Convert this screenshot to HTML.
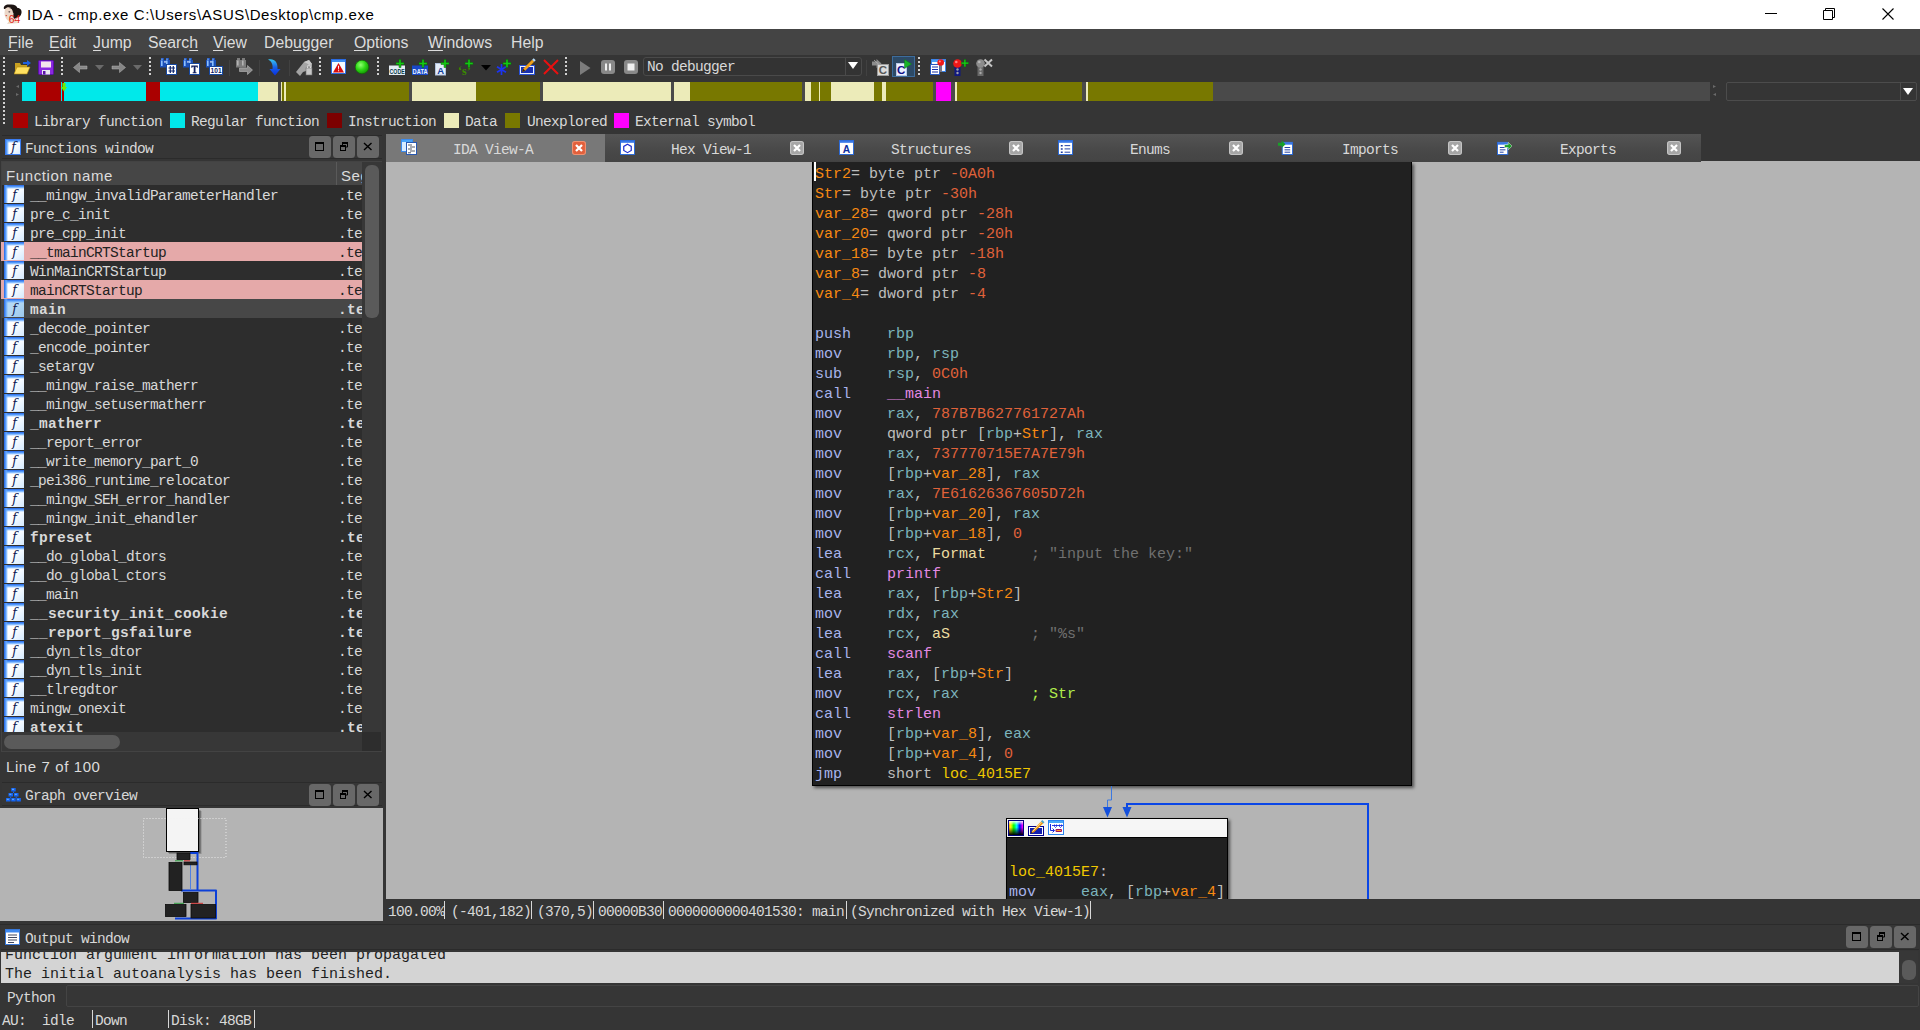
<!DOCTYPE html>
<html lang="en">
<head>
<meta charset="utf-8">
<title>IDA - cmp.exe</title>
<style>
*{box-sizing:border-box;margin:0;padding:0}
html,body{width:1920px;height:1030px;overflow:hidden;background:#353535}
body{position:relative;font-family:"Liberation Sans",sans-serif;color:#d6d6d6}
.a{position:absolute}
.mono{font-family:"Liberation Mono",monospace;font-size:14.5px;letter-spacing:-.701px;white-space:pre;color:#d8d8d8}
.ui{font-family:"Liberation Sans",sans-serif}
/* title bar */
#title{left:0;top:0;width:1920px;height:29px;background:#fff}
#title .t{left:27px;top:5px;font-size:15px;letter-spacing:.6px;color:#000;line-height:20px;white-space:pre}
/* menu */
#menu{left:0;top:29px;width:1920px;height:26px;background:#444}
#menu span{position:absolute;top:4px;font-size:15.8px;line-height:20px;color:#dcdcdc;white-space:pre}
#menu u{text-decoration:underline;text-underline-offset:2px;text-decoration-thickness:1px}
/* nav band */
#nav{left:22px;top:82px;width:1688px;height:19px;background:#4a4a4a}
#nav i{position:absolute;top:0;height:19px;display:block}
.cy{background:#00e9ea}.rd{background:#aa0000}.bg{background:#ecebb9}.ol{background:#787800}.mg{background:#ff00ff}.gp{background:#4a4a4a}
/* legend */
#legend i{position:absolute;top:113px;width:15px;height:15px;display:block}
#legend span{position:absolute;top:113px;line-height:18px}
/* grips */
.grip{width:2px;background-image:repeating-linear-gradient(to bottom,#d0d0d0 0 2px,transparent 2px 4px)}
/* dock titles */
.dtitle{background:#363636;border-top:1px solid #2b2b2b;border-bottom:1px solid #2b2b2b}
.dbtn{width:20px;height:20px;background:#585858;border-radius:3px}

.ficon{display:block;background:linear-gradient(to right,#2464e4 0,#62a8ff 2px,rgba(160,208,255,0) 4px),linear-gradient(to bottom,#2464e4 0,#62a8ff 2px,rgba(160,208,255,0) 4px),linear-gradient(135deg,#fff 45%,#d4eaff);overflow:hidden;text-align:center}
.ficon b{display:block;font:italic 12.5px/16px "DejaVu Serif","Liberation Serif",serif;color:#0c1850;margin-top:0;text-indent:1px}
.row{left:1px;width:361px;overflow:hidden}
.row .ficon{position:absolute;left:3px;top:0;width:20px;height:18px}
.row .ficon b{line-height:19px}
.row .n,.row .s{position:absolute;top:2px;font:14.5px/18px "Liberation Mono",monospace;letter-spacing:-.701px;white-space:pre;color:#d8d8d8}
.row .n{left:29px}.row .s{left:337px}
.row.pk{background:#e5a9a9}.row.pk .n,.row.pk .s{color:#222}
.row.sel{background:#474747}.row.sel .ficon{background:linear-gradient(to right,#2464e4 0,#62a8ff 2px,rgba(160,208,255,0) 4px),linear-gradient(to bottom,#2464e4 0,#62a8ff 2px,rgba(160,208,255,0) 4px),linear-gradient(135deg,#b4d8f4 45%,#9cc8ec)}
.row.bd .n,.row.bd .s{font-weight:bold;letter-spacing:.299px}
.hdr{font-size:15px;letter-spacing:.6px;line-height:20px;color:#dcdcdc;white-space:pre}

.node{background:#212121;border:1px solid #000;box-shadow:2px 2px 3px rgba(0,0,0,.55)}
.code{position:absolute;font:15px/20px "Liberation Mono",monospace;white-space:pre;color:#c8c8c8}
</style>
</head>
<body>
<!-- ===== TITLE BAR ===== -->
<div id="title" class="a">
  <svg class="a" style="left:2px;top:3px" width="22" height="22" viewBox="2 3 22 22">
    <path d="M4 9C3 6 6 4 10 4.500C14 4 17 6 17.500 8C20.500 8 22 10.500 21.500 13C21 16 19 17.500 17 17.500L14 19 9 9z" fill="#1c1412"/>
    <path d="M5 9C7 6.500 11 7 12.500 9.500C14 12 13.500 15 13 17L15 20 19 23 7 24 9 21C6 20 4.500 16 4.500 13z" fill="#ecd8c8"/>
    <path d="M9 8C12 8 13 11 13 13L15 12 13 7z" fill="#1c1412"/>
    <ellipse cx="9.300" cy="11.800" rx="1" ry=".6" fill="#4a3a40"/>
    <ellipse cx="6.300" cy="15.600" rx=".9" ry=".6" fill="#d05040"/>
    <text x="8.800" y="23" font-family="Liberation Sans,sans-serif" font-size="10.500" fill="#e02414" textLength="11.500" lengthAdjust="spacingAndGlyphs">64</text>
  </svg>
  <div class="a t ui">IDA - cmp.exe C:\Users\ASUS\Desktop\cmp.exe</div>
  <svg class="a" style="left:1760px;top:0" width="160" height="29" viewBox="0 0 160 29" fill="none" stroke="#000" stroke-width="1">
    <path d="M5 13.500H17"/>
    <path d="M63.500 10.500H72.500V19.500H63.500Z M65.500 10.500V8.500H74.500V17.500H72.500"/>
    <path d="M122.500 8.500L133.500 19.500M133.500 8.500L122.500 19.500" stroke-width="1.100"/>
  </svg>
</div>
<!-- ===== MENU BAR ===== -->
<div id="menu" class="a ui">
  <span style="left:8px"><u>F</u>ile</span>
  <span style="left:49px"><u>E</u>dit</span>
  <span style="left:93px"><u>J</u>ump</span>
  <span style="left:148px">Searc<u>h</u></span>
  <span style="left:213px"><u>V</u>iew</span>
  <span style="left:264px">Deb<u>u</u>gger</span>
  <span style="left:354px"><u>O</u>ptions</span>
  <span style="left:428px"><u>W</u>indows</span>
  <span style="left:511px">Help</span>
</div>
<!-- ===== TOOLBAR (icons inserted below) ===== -->
<div id="toolbar" class="a" style="left:0;top:55px;width:1920px;height:26px">
<div class="a grip" style="left:3px;top:2px;height:18px"></div>
<svg class="a" style="left:14px;top:4px" width="17" height="17" viewBox="0 0 17 17"><path d="M1 4h5l1 2h6v9H1z" fill="#c8a020"/><path d="M3 8h13l-3 7H0z" fill="#ffe060" stroke="#b08810" stroke-width=".6"/><path d="M9 3h4V1l4 3-4 3V5H9z" fill="#2060e0"/></svg>
<svg class="a" style="left:38px;top:5px" width="16" height="16" viewBox="0 0 16 16"><rect x=".5" y=".5" width="15" height="14" rx="1" fill="#8a28e0" stroke="#5a10a8"/><rect x="3" y="1.5" width="10" height="6" fill="#f4e4ec"/><rect x="4" y="10" width="8" height="4.5" fill="#e8e8f0"/><rect x="5" y="11" width="2.5" height="3.5" fill="#5a10a8"/></svg>
<div class="a grip" style="left:61px;top:2px;height:18px"></div>
<svg class="a" style="left:73px;top:6px" width="15" height="13" viewBox="0 0 15 13"><path d="M.5 6.500L6.500 1.500v3.500H14v3H6.500V11.500z" fill="#868686" stroke="#b4b4b4" stroke-width=".5"/></svg>
<svg class="a" style="left:95px;top:10px" width="10" height="6" viewBox="0 0 10 6"><path d="M0 0h9L4.5 5z" fill="#6a6a6a"/></svg>
<svg class="a" style="left:111px;top:6px" width="15" height="13" viewBox="0 0 15 13"><path d="M14.500 6.500L8.500 1.500v3.500H1v3H8.500V11.500z" fill="#868686" stroke="#b4b4b4" stroke-width=".5"/></svg>
<svg class="a" style="left:133px;top:10px" width="10" height="6" viewBox="0 0 10 6"><path d="M0 0h9L4.5 5z" fill="#6a6a6a"/></svg>
<div class="a grip" style="left:149px;top:2px;height:18px"></div>
<svg class="a" style="left:160px;top:3px" width="17" height="17" viewBox="0 0 17 17"><path d="M1 0h3v2h1v7.500H0V2h1zM6 0h3v2h1v7.500H5V2h1z" fill="#1c50b8"/><path d="M1 2.500h1.600v5.500H1zM6 2.500h1.600v5.500H6zM1.500 .5h1v1.500h-1zM6.500 .5h1v1.500h-1z" fill="#8cc0ff"/><rect x="4.300" y="3.200" width="1.400" height="1.400" fill="#fff"/><rect x="6.500" y="6.500" width="10" height="10" fill="#fff" stroke="#1848a0"/><path d="M8.500 10h6.500M8.500 13h6.500M10.300 8v7M13.300 8v7" stroke="#102870" stroke-width="1.200"/></svg>
<svg class="a" style="left:183px;top:3px" width="17" height="17" viewBox="0 0 17 17"><path d="M1 0h3v2h1v7.500H0V2h1zM6 0h3v2h1v7.500H5V2h1z" fill="#1c50b8"/><path d="M1 2.500h1.600v5.500H1zM6 2.500h1.600v5.500H6zM1.500 .5h1v1.500h-1zM6.500 .5h1v1.500h-1z" fill="#8cc0ff"/><rect x="4.300" y="3.200" width="1.400" height="1.400" fill="#fff"/><rect x="6.500" y="5.500" width="10" height="11" fill="#fff" stroke="#1848a0"/><path d="M8.300 7.500h6.500v2.200h-.8l-.5-1h-1v5.500h1v1h-3.800v-1h1V8.700h-1l-.5 1h-.9z" fill="#102060"/></svg>
<svg class="a" style="left:206px;top:3px" width="17" height="17" viewBox="0 0 17 17"><path d="M1 0h3v2h1v7.500H0V2h1zM6 0h3v2h1v7.500H5V2h1z" fill="#1c50b8"/><path d="M1 2.500h1.600v5.500H1zM6 2.500h1.600v5.500H6zM1.500 .5h1v1.500h-1zM6.500 .5h1v1.500h-1z" fill="#8cc0ff"/><rect x="4.300" y="3.200" width="1.400" height="1.400" fill="#fff"/><rect x="3.500" y="8.500" width="13" height="8" fill="#fff" stroke="#1848a0"/><text x="4.600" y="15.300" font-family="Liberation Sans,sans-serif" font-size="7" font-weight="bold" fill="#102060" textLength="11" lengthAdjust="spacingAndGlyphs">101</text></svg>
<div class="a" style="left:229px;top:5px;width:1px;height:16px;background:#414141"></div>
<svg class="a" style="left:235px;top:3px" width="18" height="17" viewBox="0 0 18 17"><path d="M2 0h3v2h1v7.500H1V2h1zM7 0h3v2h1v7.500H6V2h1z" fill="#7c7c7c"/><path d="M2 2.500h1.600v5H2zM7 2.500h1.600v5H7z" fill="#b4b4b4"/><path d="M4.500 10h8V7.500L17.500 12 12.500 16.500V13.500h-8z" fill="#8c8c8c" stroke="#b8b8b8" stroke-width=".6"/></svg>
<div class="a" style="left:259px;top:5px;width:1px;height:16px;background:#414141"></div>
<svg class="a" style="left:266px;top:3px" width="16" height="19" viewBox="0 0 16 19"><defs><linearGradient id="ba" x1="0" y1="0" x2="0" y2="1"><stop offset="0" stop-color="#38c8f0"/><stop offset=".5" stop-color="#1860e8"/><stop offset="1" stop-color="#0a30e0"/></linearGradient></defs><path d="M2 1.500c6-1.500 10 2 9.500 9.500H14.500l-5.500 6.500L3.500 11h3C7 6.500 5.500 3 2 1.500z" fill="url(#ba)"/></svg>
<div class="a" style="left:289px;top:5px;width:1px;height:16px;background:#414141"></div>
<svg class="a" style="left:295px;top:4px" width="19" height="17" viewBox="0 0 19 17"><path d="M1 13L9 3l5-2 3 4v5l-9 3-3 4z" fill="#a4a4a4"/><path d="M9 3l5-2 3 4-2 1z" fill="#c8c8c8"/><rect x="11" y="9" width="6" height="7" fill="#c8c8c8" stroke="#707070" stroke-width=".6"/><path d="M12.5 9V7.5a1.5 1.5 0 013 0V9" stroke="#d8d8d8" fill="none"/></svg>
<div class="a grip" style="left:319px;top:2px;height:18px"></div>
<svg class="a" style="left:331px;top:4px" width="15" height="15" viewBox="0 0 15 15"><rect x=".5" y=".5" width="14" height="14" fill="#f4fcff" stroke="#2a6ae0"/><rect x="1" y="1" width="13" height="2" fill="#3c90f4"/><path d="M7.500 4l5.500 9.500H2z" fill="#d80c0c"/><path d="M7 6.800h1.100l-.2 3.600h-.7zM7 11.200h1.100v1.100H7z" fill="#fff"/></svg>
<svg class="a" style="left:355px;top:5px" width="15" height="15" viewBox="0 0 15 15"><defs><radialGradient id="gb" cx=".4" cy=".35" r=".7"><stop offset="0" stop-color="#90ff70"/><stop offset=".5" stop-color="#30d818"/><stop offset="1" stop-color="#109000"/></radialGradient></defs><circle cx="7" cy="7" r="6.800" fill="url(#gb)" stroke="#0a6a00" stroke-width=".6"/></svg>
<div class="a grip" style="left:377px;top:2px;height:18px"></div>
<svg class="a" style="left:389px;top:4px" width="17" height="17" viewBox="0 0 17 17"><rect x="0" y="6.500" width="16" height="9.500" fill="#e4ecf4"/><text x=".6" y="14.600" font-family="Liberation Sans,sans-serif" font-size="7.500" font-weight="bold" fill="#083848" textLength="15" lengthAdjust="spacingAndGlyphs">CODE</text><path d="M10 .5h2v3h3v2h-3v3h-2v-3h-3v-2h3z" fill="#14c814" stroke="#0a6a0a" stroke-width=".5"/></svg>
<svg class="a" style="left:412px;top:4px" width="17" height="17" viewBox="0 0 17 17"><rect x="0" y="6.500" width="16" height="9.500" fill="#1848c8"/><text x=".6" y="14.600" font-family="Liberation Sans,sans-serif" font-size="7.500" font-weight="bold" fill="#e8f4ff" textLength="15" lengthAdjust="spacingAndGlyphs">DATA</text><path d="M10 .5h2v3h3v2h-3v3h-2v-3h-3v-2h3z" fill="#14c814" stroke="#0a6a0a" stroke-width=".5"/></svg>
<svg class="a" style="left:435px;top:4px" width="17" height="17" viewBox="0 0 17 17"><rect x=".5" y="4.500" width="10" height="11.500" fill="#e4ecf8" stroke="#b0c0dc"/><text x="2.300" y="14.500" font-family="Liberation Sans,sans-serif" font-size="9.500" font-weight="bold" fill="#103c98">A</text><path d="M9 .5h2v3h3v2h-3v3h-2v-3h-3v-2h3z" fill="#14c814" stroke="#0a6a0a" stroke-width=".5"/></svg>
<svg class="a" style="left:458px;top:4px" width="17" height="17" viewBox="0 0 17 17"><text x="0" y="15.500" font-family="Liberation Serif,serif" font-size="12" font-weight="bold" fill="#3a8a00">‘s’</text><path d="M10 .5h2v3h3v2h-3v3h-2v-3h-3v-2h3z" fill="#14c814" stroke="#0a6a0a" stroke-width=".5"/></svg>
<svg class="a" style="left:481px;top:10px" width="10" height="6" viewBox="0 0 10 6"><path d="M0 0h10L5 5.500z" fill="#000"/></svg>
<svg class="a" style="left:496px;top:4px" width="17" height="17" viewBox="0 0 17 17"><path d="M5.500 5v11M1 7.700l9 5.600M10 7.700l-9 5.600" stroke="#1c34f0" stroke-width="1.700"/><path d="M10 .5h2v3h3v2h-3v3h-2v-3h-3v-2h3z" fill="#14c814" stroke="#0a6a0a" stroke-width=".5"/></svg>
<svg class="a" style="left:519px;top:2px" width="18" height="18" viewBox="0 0 18 18"><rect x=".5" y="8.500" width="15" height="9" fill="#1830b0" stroke="#2850d8" stroke-width="1"/><rect x="1.500" y="9.500" width="13" height="7" fill="none" stroke="#e8f0ff" stroke-width="1"/><path d="M3 15l1.200-3.200 9-9 2 2-9 9z" fill="#f0a018"/><path d="M13.200 2.800l1.500-1.500 2 2-1.500 1.500z" fill="#b8dcf8"/><path d="M3 15l1.200-3.200 2 2z" fill="#302010"/></svg>
<svg class="a" style="left:543px;top:4px" width="16" height="16" viewBox="0 0 16 16"><path d="M1 1l14 14M15 1L1 15" stroke="#e81010" stroke-width="2"/></svg>
<div class="a grip" style="left:565px;top:2px;height:18px"></div>
<svg class="a" style="left:580px;top:6px" width="11" height="14" viewBox="0 0 11 14"><path d="M0 0l10.5 7L0 14z" fill="#7c7c7c"/></svg>
<svg class="a" style="left:601px;top:5px" width="14" height="14" viewBox="0 0 14 14"><rect width="14" height="14" rx="3" fill="#888"/><rect x="4" y="3.5" width="2" height="7" fill="#f0f0f0"/><rect x="8" y="3.5" width="2" height="7" fill="#f0f0f0"/></svg>
<svg class="a" style="left:624px;top:5px" width="14" height="14" viewBox="0 0 14 14"><rect width="14" height="14" rx="3" fill="#888"/><rect x="3.5" y="3.5" width="7" height="7" fill="#f0f0f0"/></svg>
<div class="a" style="left:643px;top:2px;width:219px;height:19px;background:#333;border:1px solid #4a4a4a;border-radius:3px"></div>
<div class="a" style="left:845px;top:3px;width:1px;height:17px;background:#4a4a4a"></div>
<div class="a mono" style="left:647px;top:3px;line-height:18px">No debugger</div>
<svg class="a" style="left:848px;top:7px" width="11" height="8" viewBox="0 0 11 8"><path d="M0 0h10L5 7z" fill="#fff"/></svg>
<div class="a" style="left:866px;top:5px;width:1px;height:16px;background:#414141"></div>
<svg class="a" style="left:872px;top:4px" width="17" height="17" viewBox="0 0 17 17"><path d="M0 2.500h4.500V0L9.500 4.500 4.500 9V6.500H0z" fill="#8c8c8c"/><rect x="5.500" y="5.500" width="11" height="11" fill="#dcdcdc" stroke="#9c9c9c"/><text x="6.800" y="15.300" font-family="Liberation Sans,sans-serif" font-size="11.500" font-weight="bold" fill="#585858">C</text><path d="M2 1l5 4.500" stroke="#b8b8b8" stroke-width=".8"/></svg>
<div class="a" style="left:892px;top:1px;width:23px;height:21px;background:#2d4a66;border:1px solid #3c6c9c"></div>
<svg class="a" style="left:896px;top:4px" width="17" height="17" viewBox="0 0 17 17"><rect x=".5" y="4.500" width="10" height="12" fill="#eef2ff" stroke="#b8c8e8"/><text x="1" y="15" font-family="Liberation Sans,sans-serif" font-size="11.500" font-weight="bold" fill="#101088">C</text><path d="M8.500 .5l7 4.500-7 4.500z" fill="#18b428" stroke="#0c7c18" stroke-width=".5"/></svg>
<div class="a grip" style="left:918px;top:2px;height:18px"></div>
<svg class="a" style="left:930px;top:3px" width="17" height="18" viewBox="0 0 17 18"><rect x="1.500" y="1.500" width="14" height="12" fill="#f4f8ff" stroke="#3c84e8"/><rect x="2" y="2" width="13" height="2" fill="#48a0f8"/><rect x=".5" y="6.500" width="9" height="10" fill="#fff" stroke="#2858c0"/><path d="M2 9h6M2 11.500h6M2 14h6" stroke="#1830a8" stroke-width="1.200"/><rect x="9.500" y="7" width="2.500" height="7" fill="#787888"/><circle cx="10.700" cy="4.500" r="3.300" fill="#f01818"/><circle cx="9.800" cy="3.500" r="1" fill="#ff9090"/></svg>
<svg class="a" style="left:953px;top:3px" width="18" height="18" viewBox="0 0 18 18"><rect x="1.500" y="9" width="6" height="9" fill="#101880"/><circle cx="4.500" cy="11.500" r="1.200" fill="#a0a0a8"/><circle cx="4.500" cy="15" r="1.200" fill="#a0a0a8"/><circle cx="4.500" cy="5.500" r="4.300" fill="#f01818"/><circle cx="3.300" cy="4" r="1.300" fill="#ff8080"/><path d="M11 1.500h1.800v2.700h2.700v1.800h-2.700v2.700H11V6H8.300V4.200H11z" fill="#14c814" stroke="#0a6a0a" stroke-width=".4"/></svg>
<svg class="a" style="left:976px;top:3px" width="18" height="18" viewBox="0 0 18 18"><rect x="1.500" y="9" width="6" height="9" fill="#686868"/><circle cx="4.500" cy="11.500" r="1.200" fill="#a8a8a8"/><circle cx="4.500" cy="15" r="1.200" fill="#a8a8a8"/><circle cx="4.500" cy="5.500" r="4.300" fill="#8c8c8c"/><circle cx="3.300" cy="4" r="1.300" fill="#b8b8b8"/><path d="M8.500 1.500l7.500 7M16 1.500l-7.500 7" stroke="#c4c4c4" stroke-width="2"/></svg>
</div>
<!-- ===== NAV BAND ===== -->
<div class="a grip" style="left:3px;top:82px;height:43px"></div>
<div id="nav" class="a">
<i class="cy" style="left:0px;width:14px"></i>
<i class="rd" style="left:14px;width:25px"></i>
<i class="cy" style="left:39px;width:1px"></i>
<i class="rd" style="left:40px;width:2px"></i>
<i class="cy" style="left:42px;width:82px"></i>
<i class="rd" style="left:124px;width:14px"></i>
<i class="cy" style="left:138px;width:98px"></i>
<i class="bg" style="left:236px;width:20px"></i>
<i class="gp" style="left:256px;width:3px"></i>
<i class="bg" style="left:259px;width:1px"></i>
<i class="ol" style="left:260px;width:2px"></i>
<i class="bg" style="left:262px;width:2px"></i>
<i class="ol" style="left:264px;width:123px"></i>
<i class="gp" style="left:387px;width:3px"></i>
<i class="bg" style="left:390px;width:64px"></i>
<i class="ol" style="left:454px;width:64px"></i>
<i class="gp" style="left:518px;width:3px"></i>
<i class="bg" style="left:521px;width:128px"></i>
<i class="gp" style="left:649px;width:3px"></i>
<i class="bg" style="left:652px;width:16px"></i>
<i class="ol" style="left:668px;width:112px"></i>
<i class="gp" style="left:780px;width:3px"></i>
<i class="bg" style="left:783px;width:6px"></i>
<i class="ol" style="left:789px;width:8px"></i>
<i class="bg" style="left:797px;width:1px"></i>
<i class="ol" style="left:798px;width:11px"></i>
<i class="bg" style="left:809px;width:43px"></i>
<i class="ol" style="left:852px;width:8px"></i>
<i class="bg" style="left:860px;width:4px"></i>
<i class="ol" style="left:864px;width:47px"></i>
<i class="gp" style="left:911px;width:3px"></i>
<i class="mg" style="left:914px;width:15px"></i>
<i class="gp" style="left:929px;width:4px"></i>
<i class="bg" style="left:933px;width:2px"></i>
<i class="ol" style="left:935px;width:125px"></i>
<i class="gp" style="left:1060px;width:4px"></i>
<i class="bg" style="left:1064px;width:2px"></i>
<i class="ol" style="left:1066px;width:125px"></i>
<svg class="a" style="left:39px;top:1px" width="6" height="9" viewBox="0 0 6 9"><path d="M1.5 0H4.5V4H6L3 8.5L0 4H1.5Z" fill="#6cf000"/></svg>
</div>
<div class="a" style="left:1726px;top:82px;width:191px;height:19px;background:#353535;border:1px solid #4c4c4c;border-radius:2px"></div>
<div class="a" style="left:1900px;top:83px;width:1px;height:17px;background:#4c4c4c"></div>
<svg class="a" style="left:1903px;top:88px" width="11" height="8" viewBox="0 0 11 8"><path d="M0 0h10L5 7z" fill="#fff"/></svg>
<svg class="a" style="left:1713px;top:85px" width="4" height="12" viewBox="0 0 4 12"><path d="M0 0l3 1.500-3 1.500zM3 8l-3 1.500 3 1.500z" fill="#6a6a6a"/></svg>
<svg class="a" style="left:16px;top:85px" width="4" height="12" viewBox="0 0 4 12"><path d="M3 0l-3 1.500 3 1.500zM0 8l3 1.500-3 1.500z" fill="#6a6a6a"/></svg>
<!-- ===== LEGEND ===== -->
<div id="legend" class="a mono" style="left:0;top:0">
<i style="left:13px;background:#aa0000"></i><span style="left:34px">Library function</span>
<i style="left:170px;background:#00e9ea"></i><span style="left:191px">Regular function</span>
<i style="left:327px;background:#7c0000"></i><span style="left:348px">Instruction</span>
<i style="left:444px;background:#ecebb9"></i><span style="left:465px">Data</span>
<i style="left:505px;background:#787800"></i><span style="left:527px">Unexplored</span>
<i style="left:614px;background:#ff00ff"></i><span style="left:635px">External symbol</span>
</div>
<!-- ===== LEFT: FUNCTIONS WINDOW ===== -->
<div id="funcs" class="a" style="left:0;top:133px;width:386px;height:650px">
<div class="a dtitle" style="left:2px;top:2px;width:380px;height:24px"></div>
<div class="a ficon" style="left:5px;top:6px;width:16px;height:16px;box-shadow:inset 0 0 0 1px #3a7cf0"><b>f</b></div>
<div class="a mono" style="left:25px;top:7px;line-height:18px">Functions window</div>
<svg class="a" style="left:309px;top:3px" width="22" height="22" viewBox="-.5 -.5 22 22"><rect x="-.5" y="-.5" width="22" height="22" rx="3.500" fill="#686868"/><rect x="6" y="6" width="8" height="8" fill="none" stroke="#000" stroke-width="1"/><rect x="5.500" y="5.500" width="9" height="2" fill="#000"/></svg><svg class="a" style="left:333px;top:3px" width="22" height="22" viewBox="-.5 -.5 22 22"><rect x="-.5" y="-.5" width="22" height="22" rx="3.500" fill="#686868"/><rect x="7" y="9" width="5" height="5" fill="none" stroke="#000" stroke-width="1"/><rect x="6.500" y="8.500" width="6" height="2" fill="#000"/><path d="M9 8.500V6H14V10.500H12.500" fill="none" stroke="#000" stroke-width="1"/><rect x="8.500" y="5.500" width="6" height="2" fill="#000"/></svg><svg class="a" style="left:357px;top:3px" width="22" height="22" viewBox="-.5 -.5 22 22"><rect x="-.5" y="-.5" width="22" height="22" rx="3.500" fill="#686868"/><path d="M6.500 6.500l7.500 7M14 6.500l-7.500 7" stroke="#000" stroke-width="1.400"/></svg>
<div class="a" style="left:1px;top:28px;width:381px;height:591px;background:#2d2d2d;border:1px solid #434343"></div>
<div class="a" style="left:2px;top:29px;width:360px;height:23px;background:#464646"></div>
<div class="a" style="left:336px;top:29px;width:1px;height:23px;background:#5a5a5a"></div>
<div class="a ui hdr" style="left:6px;top:33px">Function name</div>
<div class="a ui hdr" style="left:341px;top:33px;width:22px;overflow:hidden">Seg</div>
<div class="a row" style="top:52px;height:19px"><i class="ficon"><b>f</b></i><span class="n">__mingw_invalidParameterHandler</span><span class="s">.te</span></div>
<div class="a row" style="top:71px;height:19px"><i class="ficon"><b>f</b></i><span class="n">pre_c_init</span><span class="s">.te</span></div>
<div class="a row" style="top:90px;height:19px"><i class="ficon"><b>f</b></i><span class="n">pre_cpp_init</span><span class="s">.te</span></div>
<div class="a row pk" style="top:109px;height:19px"><i class="ficon"><b>f</b></i><span class="n">__tmainCRTStartup</span><span class="s">.te</span></div>
<div class="a row" style="top:128px;height:19px"><i class="ficon"><b>f</b></i><span class="n">WinMainCRTStartup</span><span class="s">.te</span></div>
<div class="a row pk" style="top:147px;height:19px"><i class="ficon"><b>f</b></i><span class="n">mainCRTStartup</span><span class="s">.te</span></div>
<div class="a row sel bd" style="top:166px;height:19px"><i class="ficon"><b>f</b></i><span class="n">main</span><span class="s">.te</span></div>
<div class="a row" style="top:185px;height:19px"><i class="ficon"><b>f</b></i><span class="n">_decode_pointer</span><span class="s">.te</span></div>
<div class="a row" style="top:204px;height:19px"><i class="ficon"><b>f</b></i><span class="n">_encode_pointer</span><span class="s">.te</span></div>
<div class="a row" style="top:223px;height:19px"><i class="ficon"><b>f</b></i><span class="n">_setargv</span><span class="s">.te</span></div>
<div class="a row" style="top:242px;height:19px"><i class="ficon"><b>f</b></i><span class="n">__mingw_raise_matherr</span><span class="s">.te</span></div>
<div class="a row" style="top:261px;height:19px"><i class="ficon"><b>f</b></i><span class="n">__mingw_setusermatherr</span><span class="s">.te</span></div>
<div class="a row bd" style="top:280px;height:19px"><i class="ficon"><b>f</b></i><span class="n">_matherr</span><span class="s">.te</span></div>
<div class="a row" style="top:299px;height:19px"><i class="ficon"><b>f</b></i><span class="n">__report_error</span><span class="s">.te</span></div>
<div class="a row" style="top:318px;height:19px"><i class="ficon"><b>f</b></i><span class="n">__write_memory_part_0</span><span class="s">.te</span></div>
<div class="a row" style="top:337px;height:19px"><i class="ficon"><b>f</b></i><span class="n">_pei386_runtime_relocator</span><span class="s">.te</span></div>
<div class="a row" style="top:356px;height:19px"><i class="ficon"><b>f</b></i><span class="n">__mingw_SEH_error_handler</span><span class="s">.te</span></div>
<div class="a row" style="top:375px;height:19px"><i class="ficon"><b>f</b></i><span class="n">__mingw_init_ehandler</span><span class="s">.te</span></div>
<div class="a row bd" style="top:394px;height:19px"><i class="ficon"><b>f</b></i><span class="n">fpreset</span><span class="s">.te</span></div>
<div class="a row" style="top:413px;height:19px"><i class="ficon"><b>f</b></i><span class="n">__do_global_dtors</span><span class="s">.te</span></div>
<div class="a row" style="top:432px;height:19px"><i class="ficon"><b>f</b></i><span class="n">__do_global_ctors</span><span class="s">.te</span></div>
<div class="a row" style="top:451px;height:19px"><i class="ficon"><b>f</b></i><span class="n">__main</span><span class="s">.te</span></div>
<div class="a row bd" style="top:470px;height:19px"><i class="ficon"><b>f</b></i><span class="n">__security_init_cookie</span><span class="s">.te</span></div>
<div class="a row bd" style="top:489px;height:19px"><i class="ficon"><b>f</b></i><span class="n">__report_gsfailure</span><span class="s">.te</span></div>
<div class="a row" style="top:508px;height:19px"><i class="ficon"><b>f</b></i><span class="n">__dyn_tls_dtor</span><span class="s">.te</span></div>
<div class="a row" style="top:527px;height:19px"><i class="ficon"><b>f</b></i><span class="n">__dyn_tls_init</span><span class="s">.te</span></div>
<div class="a row" style="top:546px;height:19px"><i class="ficon"><b>f</b></i><span class="n">__tlregdtor</span><span class="s">.te</span></div>
<div class="a row" style="top:565px;height:19px"><i class="ficon"><b>f</b></i><span class="n">mingw_onexit</span><span class="s">.te</span></div>
<div class="a row bd" style="top:584px;height:15px"><i class="ficon"><b>f</b></i><span class="n">atexit</span><span class="s">.te</span></div>
<div class="a" style="left:362px;top:29px;width:20px;height:570px;background:#373737"></div>
<div class="a" style="left:365px;top:32px;width:14px;height:153px;background:#5a5a5a;border-radius:6px"></div>
<div class="a" style="left:2px;top:599px;width:380px;height:19px;background:#373737"></div>
<div class="a" style="left:362px;top:599px;width:19px;height:19px;background:#2d2d2d"></div>
<div class="a" style="left:4px;top:602px;width:116px;height:14px;background:#5a5a5a;border-radius:7px"></div>
<div class="a ui hdr" style="left:6px;top:624px">Line 7 of 100</div>
</div>
<!-- ===== LEFT: GRAPH OVERVIEW ===== -->
<div id="overview" class="a" style="left:0;top:783px;width:386px;height:140px">
<div class="a dtitle" style="left:2px;top:-1px;width:380px;height:24px"></div>
<svg class="a" style="left:6px;top:4.5px" width="15" height="14" viewBox="0 0 15 14"><g fill="#1464f0"><rect x="5.200" y="0" width="4.500" height="3.500"/><rect x="2.500" y="5" width="4.500" height="3.500"/><rect x="8" y="5" width="4.500" height="3.500"/><rect x="0" y="10" width="4.500" height="3.500"/><rect x="5.200" y="10" width="4.500" height="3.500"/><rect x="10.400" y="10" width="4.500" height="3.500"/></g><g fill="#70b4ff"><rect x="6" y=".8" width="2" height="1"/><rect x="3.300" y="5.800" width="2" height="1"/><rect x="8.800" y="5.800" width="2" height="1"/><rect x=".8" y="10.800" width="2" height="1"/><rect x="6" y="10.800" width="2" height="1"/><rect x="11.200" y="10.800" width="2" height="1"/></g><path d="M7.500 3.500v1.500M4.700 8.500v1.500M10.200 8.500v1.500" stroke="#1464f0"/></svg>
<div class="a mono" style="left:25px;top:4px;line-height:18px">Graph overview</div>
<svg class="a" style="left:309px;top:1px" width="22" height="22" viewBox="-.5 -.5 22 22"><rect x="-.5" y="-.5" width="22" height="22" rx="3.500" fill="#686868"/><rect x="6" y="6" width="8" height="8" fill="none" stroke="#000" stroke-width="1"/><rect x="5.500" y="5.500" width="9" height="2" fill="#000"/></svg><svg class="a" style="left:333px;top:1px" width="22" height="22" viewBox="-.5 -.5 22 22"><rect x="-.5" y="-.5" width="22" height="22" rx="3.500" fill="#686868"/><rect x="7" y="9" width="5" height="5" fill="none" stroke="#000" stroke-width="1"/><rect x="6.500" y="8.500" width="6" height="2" fill="#000"/><path d="M9 8.500V6H14V10.500H12.500" fill="none" stroke="#000" stroke-width="1"/><rect x="8.500" y="5.500" width="6" height="2" fill="#000"/></svg><svg class="a" style="left:357px;top:1px" width="22" height="22" viewBox="-.5 -.5 22 22"><rect x="-.5" y="-.5" width="22" height="22" rx="3.500" fill="#686868"/><path d="M6.500 6.500l7.500 7M14 6.500l-7.500 7" stroke="#000" stroke-width="1.400"/></svg>
<svg class="a" style="left:0;top:25px" width="383" height="113" viewBox="0 0 383 113"><rect x="0" y="0" width="383" height="113" fill="#b4b4b4"/><rect x="169" y="3" width="32.5" height="43" fill="#000" opacity=".22"/><rect x="168" y="2" width="32.5" height="43" fill="#000" opacity=".3"/><rect x="166.5" y="0.5" width="32.0" height="43.0" fill="#f4f4f4" stroke="#000" stroke-width="1"/><rect x="143.5" y="10.5" width="82.5" height="39" fill="none" stroke="#f0f0f0" stroke-width="1" stroke-dasharray="1 2" opacity=".85"/><path d="M190 45H197.500V82.5M181 82.5H216V110.5H175" fill="none" stroke="#0c40d8" stroke-width="2" stroke-linejoin="round"/><path d="M190.5 56V82" stroke="#5080e0" stroke-width="1"/><rect x="177" y="45" width="13" height="6.5" fill="#222" stroke="#0c0c0c" stroke-width=".8"/><rect x="184" y="54" width="13" height="2.7999999999999545" fill="#222" stroke="#0c0c0c" stroke-width=".8"/><rect x="175" y="52.299999999999955" width="8" height="1.0" fill="#30a040" /><rect x="184" y="52.299999999999955" width="6" height="1.0" fill="#d03030" /><rect x="169" y="54.5" width="13" height="28.0" fill="#222" stroke="#0c0c0c" stroke-width=".8"/><rect x="183.5" y="84.5" width="14.5" height="10.0" fill="#222" stroke="#0c0c0c" stroke-width=".8"/><rect x="174" y="94.79999999999995" width="10" height="1.0" fill="#30a040" /><rect x="191" y="94.79999999999995" width="12" height="1.0" fill="#d03030" /><rect x="165.5" y="96.5" width="20.5" height="12.0" fill="#222" stroke="#0c0c0c" stroke-width=".8"/><rect x="191" y="96.5" width="24.5" height="13.5" fill="#222" stroke="#0c0c0c" stroke-width=".8"/></svg>
</div>
<!-- ===== MAIN: TABS + GRAPH ===== -->
<div id="main" class="a" style="left:386px;top:133px;width:1534px;height:790px">
<div class="a" style="left:0;top:28px;width:1534px;height:738px;background:#b4b4b4"></div>
<div class="a" style="left:0;top:1px;width:1315px;height:28px;background:linear-gradient(#545454,#484848 60%,#444)"></div>
<div class="a" style="left:0;top:1px;width:219px;height:28px;background:#787878"></div>
<svg class="a" style="left:15px;top:6px" width="16" height="16" viewBox="0 0 16 16"><rect x=".5" y=".5" width="11" height="12" fill="#d8ecff" stroke="#3c8cf0"/><rect x="1" y="1" width="10" height="2" fill="#48a4f8"/><rect x="5.500" y="3.500" width="10" height="12" fill="#fff" stroke="#2858b0"/><path d="M7 6h4M9 8h5M7 10h4M9 12h5M7 13.800h3" stroke="#404858" stroke-width=".9"/></svg>
<div class="a mono" style="left:67px;top:8px;line-height:18px">IDA View-A</div>
<svg class="a" style="left:186px;top:8px" width="14" height="14" viewBox="0 0 13 13"><rect x=".5" y=".5" width="12" height="12" rx="2" fill="#e2603c" stroke="#f09070" stroke-width="1"/><path d="M3.700 3.700l5.600 5.600M9.300 3.700l-5.600 5.600" stroke="#fff" stroke-width="2.100"/></svg>
<svg class="a" style="left:234px;top:7px" width="15" height="15" viewBox="0 0 16 16"><rect x=".5" y=".5" width="15" height="15" fill="#fff" stroke="#2868d8"/><rect x="1" y="1" width="14" height="2" fill="#3878e8"/><path d="M8 4.5l4 2.3v4.4l-4 2.3-4-2.3V6.800z" fill="none" stroke="#2030d0" stroke-width="1.3"/></svg>
<div class="a mono" style="left:285px;top:8px;line-height:18px">Hex View-1</div>
<svg class="a" style="left:404px;top:8px" width="14" height="14" viewBox="0 0 13 13"><rect x=".5" y=".5" width="12" height="12" rx="2" fill="#a6a6a6" stroke="#c4c4c4" stroke-width="1"/><path d="M3.700 3.700l5.600 5.600M9.300 3.700l-5.600 5.600" stroke="#fff" stroke-width="2.100"/></svg>
<svg class="a" style="left:453px;top:7px" width="15" height="15" viewBox="0 0 16 16"><rect x=".5" y=".5" width="15" height="15" fill="#fff" stroke="#2868d8"/><rect x="1" y="1" width="14" height="2" fill="#3878e8"/><text x="4" y="14" font-family="Liberation Sans,sans-serif" font-size="11" font-weight="bold" fill="#1030a0">A</text></svg>
<div class="a mono" style="left:505px;top:8px;line-height:18px">Structures</div>
<svg class="a" style="left:623px;top:8px" width="14" height="14" viewBox="0 0 13 13"><rect x=".5" y=".5" width="12" height="12" rx="2" fill="#a6a6a6" stroke="#c4c4c4" stroke-width="1"/><path d="M3.700 3.700l5.600 5.600M9.300 3.700l-5.600 5.600" stroke="#fff" stroke-width="2.100"/></svg>
<svg class="a" style="left:672px;top:7px" width="15" height="15" viewBox="0 0 16 16"><rect x=".5" y=".5" width="15" height="15" fill="#fff" stroke="#2868d8"/><rect x="1" y="1" width="14" height="2" fill="#3878e8"/><path d="M3 6h2M3 9.500h2M3 13h2" stroke="#1838a0" stroke-width="1.6"/><path d="M7 6h6M7 9.500h6M7 13h6" stroke="#1838a0" stroke-width="1"/></svg>
<div class="a mono" style="left:744px;top:8px;line-height:18px">Enums</div>
<svg class="a" style="left:843px;top:8px" width="14" height="14" viewBox="0 0 13 13"><rect x=".5" y=".5" width="12" height="12" rx="2" fill="#a6a6a6" stroke="#c4c4c4" stroke-width="1"/><path d="M3.700 3.700l5.600 5.600M9.300 3.700l-5.600 5.600" stroke="#fff" stroke-width="2.100"/></svg>
<svg class="a" style="left:892px;top:7px" width="15" height="15" viewBox="0 0 16 16"><rect x="4.500" y="2.500" width="11" height="13" fill="#fff" stroke="#2868d8"/><rect x="5" y="3" width="10" height="2" fill="#3878e8"/><path d="M7 8h6M7 10.500h6M7 13h6" stroke="#1838a0"/><path d="M0 3h4V.5L8 4.500 4 8.500V6H0z" fill="#18a028"/></svg>
<div class="a mono" style="left:956px;top:8px;line-height:18px">Imports</div>
<svg class="a" style="left:1062px;top:8px" width="14" height="14" viewBox="0 0 13 13"><rect x=".5" y=".5" width="12" height="12" rx="2" fill="#a6a6a6" stroke="#c4c4c4" stroke-width="1"/><path d="M3.700 3.700l5.600 5.600M9.300 3.700l-5.600 5.600" stroke="#fff" stroke-width="2.100"/></svg>
<svg class="a" style="left:1111px;top:7px" width="15" height="15" viewBox="0 0 16 16"><rect x=".5" y="2.500" width="11" height="13" fill="#fff" stroke="#2868d8"/><rect x="1" y="3" width="10" height="2" fill="#3878e8"/><path d="M3 8h6M3 10.500h6M3 13h4" stroke="#1838a0"/><path d="M8 5h4V2.500l4 4-4 4V8H8z" fill="#18a028" stroke="#fff" stroke-width=".5"/></svg>
<div class="a mono" style="left:1174px;top:8px;line-height:18px">Exports</div>
<svg class="a" style="left:1281px;top:8px" width="14" height="14" viewBox="0 0 13 13"><rect x=".5" y=".5" width="12" height="12" rx="2" fill="#a6a6a6" stroke="#c4c4c4" stroke-width="1"/><path d="M3.700 3.700l5.600 5.600M9.300 3.700l-5.600 5.600" stroke="#fff" stroke-width="2.100"/></svg>
<div class="a node" style="left:426px;top:29px;width:600px;height:624px;border-top:0"><pre class="code" style="left:2px;top:3px"><span style="color:#f88a12">Str2</span><span style="color:#bebebe">= byte ptr </span><span style="color:#e0623a">-0A0h</span>
<span style="color:#f88a12">Str</span><span style="color:#bebebe">= byte ptr </span><span style="color:#e0623a">-30h</span>
<span style="color:#f88a12">var_28</span><span style="color:#bebebe">= qword ptr </span><span style="color:#e0623a">-28h</span>
<span style="color:#f88a12">var_20</span><span style="color:#bebebe">= qword ptr </span><span style="color:#e0623a">-20h</span>
<span style="color:#f88a12">var_18</span><span style="color:#bebebe">= byte ptr </span><span style="color:#e0623a">-18h</span>
<span style="color:#f88a12">var_8</span><span style="color:#bebebe">= dword ptr </span><span style="color:#e0623a">-8</span>
<span style="color:#f88a12">var_4</span><span style="color:#bebebe">= dword ptr </span><span style="color:#e0623a">-4</span>

<span style="color:#a8b4ec">push    </span><span style="color:#7cb4bc">rbp</span>
<span style="color:#a8b4ec">mov     </span><span style="color:#7cb4bc">rbp</span><span style="color:#bebebe">, </span><span style="color:#7cb4bc">rsp</span>
<span style="color:#a8b4ec">sub     </span><span style="color:#7cb4bc">rsp</span><span style="color:#bebebe">, </span><span style="color:#e0623a">0C0h</span>
<span style="color:#a8b4ec">call    </span><span style="color:#e48ae4">__main</span>
<span style="color:#a8b4ec">mov     </span><span style="color:#7cb4bc">rax</span><span style="color:#bebebe">, </span><span style="color:#e0623a">787B7B627761727Ah</span>
<span style="color:#a8b4ec">mov     </span><span style="color:#bebebe">qword ptr [</span><span style="color:#7cb4bc">rbp</span><span style="color:#bebebe">+</span><span style="color:#f88a12">Str</span><span style="color:#bebebe">], </span><span style="color:#7cb4bc">rax</span>
<span style="color:#a8b4ec">mov     </span><span style="color:#7cb4bc">rax</span><span style="color:#bebebe">, </span><span style="color:#e0623a">737770715E7A7E79h</span>
<span style="color:#a8b4ec">mov     </span><span style="color:#bebebe">[</span><span style="color:#7cb4bc">rbp</span><span style="color:#bebebe">+</span><span style="color:#f88a12">var_28</span><span style="color:#bebebe">], </span><span style="color:#7cb4bc">rax</span>
<span style="color:#a8b4ec">mov     </span><span style="color:#7cb4bc">rax</span><span style="color:#bebebe">, </span><span style="color:#e0623a">7E61626367605D72h</span>
<span style="color:#a8b4ec">mov     </span><span style="color:#bebebe">[</span><span style="color:#7cb4bc">rbp</span><span style="color:#bebebe">+</span><span style="color:#f88a12">var_20</span><span style="color:#bebebe">], </span><span style="color:#7cb4bc">rax</span>
<span style="color:#a8b4ec">mov     </span><span style="color:#bebebe">[</span><span style="color:#7cb4bc">rbp</span><span style="color:#bebebe">+</span><span style="color:#f88a12">var_18</span><span style="color:#bebebe">], </span><span style="color:#e0623a">0</span>
<span style="color:#a8b4ec">lea     </span><span style="color:#7cb4bc">rcx</span><span style="color:#bebebe">, </span><span style="color:#ecdca0">Format</span><span style="color:#707070">     ; &quot;input the key:&quot;</span>
<span style="color:#a8b4ec">call    </span><span style="color:#e48ae4">printf</span>
<span style="color:#a8b4ec">lea     </span><span style="color:#7cb4bc">rax</span><span style="color:#bebebe">, [</span><span style="color:#7cb4bc">rbp</span><span style="color:#bebebe">+</span><span style="color:#f88a12">Str2</span><span style="color:#bebebe">]</span>
<span style="color:#a8b4ec">mov     </span><span style="color:#7cb4bc">rdx</span><span style="color:#bebebe">, </span><span style="color:#7cb4bc">rax</span>
<span style="color:#a8b4ec">lea     </span><span style="color:#7cb4bc">rcx</span><span style="color:#bebebe">, </span><span style="color:#ecdca0">aS</span><span style="color:#707070">         ; &quot;%s&quot;</span>
<span style="color:#a8b4ec">call    </span><span style="color:#e48ae4">scanf</span>
<span style="color:#a8b4ec">lea     </span><span style="color:#7cb4bc">rax</span><span style="color:#bebebe">, [</span><span style="color:#7cb4bc">rbp</span><span style="color:#bebebe">+</span><span style="color:#f88a12">Str</span><span style="color:#bebebe">]</span>
<span style="color:#a8b4ec">mov     </span><span style="color:#7cb4bc">rcx</span><span style="color:#bebebe">, </span><span style="color:#7cb4bc">rax</span><span style="color:#b0ec4c">        ; Str</span>
<span style="color:#a8b4ec">call    </span><span style="color:#e48ae4">strlen</span>
<span style="color:#a8b4ec">mov     </span><span style="color:#bebebe">[</span><span style="color:#7cb4bc">rbp</span><span style="color:#bebebe">+</span><span style="color:#f88a12">var_8</span><span style="color:#bebebe">], </span><span style="color:#7cb4bc">eax</span>
<span style="color:#a8b4ec">mov     </span><span style="color:#bebebe">[</span><span style="color:#7cb4bc">rbp</span><span style="color:#bebebe">+</span><span style="color:#f88a12">var_4</span><span style="color:#bebebe">], </span><span style="color:#e0623a">0</span>
<span style="color:#a8b4ec">jmp     </span><span style="color:#bebebe">short </span><span style="color:#f0c800">loc_4015E7</span></pre><div class="a" style="left:1px;top:0;width:2px;height:19px;background:#fff"></div></div>
<div class="a node" style="left:620px;top:685px;width:222px;height:81px;border-bottom:0"><div class="a" style="left:0;top:0;width:220px;height:19px;background:#f6f6f6;border-bottom:1px solid #000"></div><pre class="code" style="left:2px;top:24px"> 
<span style="color:#f0c800">loc_4015E7</span><span style="color:#bebebe">:</span>
<span style="color:#a8b4ec">mov     </span><span style="color:#7cb4bc">eax</span><span style="color:#bebebe">, [</span><span style="color:#7cb4bc">rbp</span><span style="color:#bebebe">+</span><span style="color:#f88a12">var_4</span><span style="color:#bebebe">]</span></pre></div>
<svg class="a" style="left:622px;top:687px" width="58" height="17" viewBox="0 0 58 17"><defs><linearGradient id="rb" x1="0" x2="1"><stop offset="0" stop-color="#ff9000"/><stop offset=".15" stop-color="#ff0"/><stop offset=".35" stop-color="#0f0"/><stop offset=".55" stop-color="#0ff"/><stop offset=".75" stop-color="#00f"/><stop offset=".95" stop-color="#f0f"/></linearGradient><linearGradient id="bk" x1="0" x2="0" y1="0" y2="1"><stop offset="0" stop-color="#fff" stop-opacity=".9"/><stop offset=".3" stop-color="#fff" stop-opacity="0"/><stop offset=".45" stop-color="#000" stop-opacity="0"/><stop offset="1" stop-color="#000"/></linearGradient></defs><rect x=".5" y=".5" width="15" height="15" fill="url(#rb)" stroke="#000080"/><rect x="1" y="1" width="14" height="14" fill="url(#bk)"/><rect x="20.500" y="6.500" width="15" height="9" fill="#fff" stroke="#000090"/><rect x="22" y="8" width="12" height="6" fill="#1420b0"/><path d="M23 13.500l1.300-3 9.200-9.500 2 2-9.500 9.200z" fill="#f09810"/><path d="M24.500 11.500l9-9.300" stroke="#fff0c0" stroke-width=".8"/><path d="M33 1.300l1.300-1.300 2.200 2.200-1.300 1.300z" fill="#48a8d0"/><path d="M23 13.500l.6-1.500 1 1z" fill="#000"/><rect x="40.500" y=".5" width="15" height="14" fill="#fff" stroke="#2c84f0"/><rect x="41" y="1" width="14" height="2" fill="#48a8f8"/><path d="M42.500 4v6.500h3.500M44.500 8.500l2 2-2 2" stroke="#1828e0" fill="none"/><path d="M44 5.500h11M46.500 4.500v2l1 1 1-1v-2M51.500 4.500v2l1 1 1-1v-2" stroke="#1828e0" fill="none" stroke-width=".9"/><rect x="47.500" y="9" width="6.500" height="3" rx="1" fill="#a01060"/><rect x="48.500" y="10" width="4.500" height="1" fill="#ffa020"/></svg>
<svg class="a" style="left:704px;top:653px" width="300" height="113" viewBox="1090 786 300 113"><path d="M1111.500 786V800H1107.500V808" fill="none" stroke="#3c78e0" stroke-width="1"/><path d="M1103 807h9l-4.500 10.500z" fill="#1450dc"/><path d="M1127 808V804H1368V899" fill="none" stroke="#0a46e6" stroke-width="2"/><path d="M1122.500 807h9l-4.500 10.500z" fill="#1450dc"/></svg>
<div class="a" style="left:0;top:766px;width:1534px;height:24px;background:#353535"></div>
<div class="a mono" style="left:2px;top:770px;line-height:18px">100.00%</div>
<div class="a mono" style="left:65px;top:770px;line-height:18px">(-401,182)</div>
<div class="a mono" style="left:151px;top:770px;line-height:18px">(370,5)</div>
<div class="a mono" style="left:212px;top:770px;line-height:18px">00000B30</div>
<div class="a mono" style="left:282px;top:770px;line-height:18px">0000000000401530: main</div>
<div class="a mono" style="left:464px;top:770px;line-height:18px">(Synchronized with Hex View-1)</div>
<div class="a" style="left:58px;top:768px;width:1px;height:18px;background:#d8d8d8"></div>
<div class="a" style="left:145px;top:768px;width:1px;height:18px;background:#d8d8d8"></div>
<div class="a" style="left:207px;top:768px;width:1px;height:18px;background:#d8d8d8"></div>
<div class="a" style="left:277px;top:768px;width:1px;height:18px;background:#d8d8d8"></div>
<div class="a" style="left:460px;top:768px;width:1px;height:18px;background:#d8d8d8"></div>
<div class="a" style="left:704px;top:768px;width:1px;height:18px;background:#d8d8d8"></div>
</div>
<!-- ===== OUTPUT WINDOW ===== -->
<div id="output" class="a" style="left:0;top:923px;width:1920px;height:107px">
<div class="a" style="left:0;top:1px;width:1920px;height:1px;background:#2b2b2b"></div>
<div class="a dtitle" style="left:1px;top:2px;width:1918px;height:25px;border-top:0"></div>
<svg class="a" style="left:5px;top:6px" width="16" height="16" viewBox="0 0 16 16"><rect x=".5" y=".5" width="14" height="15" fill="#fff" stroke="#3878d8"/><rect x="1" y="1" width="13" height="2.500" fill="#3c88f0"/><path d="M3 6h9M3 8.500h9M3 11h9M3 13.500h6" stroke="#404860" stroke-width="1"/></svg>
<div class="a mono" style="left:25px;top:7px;line-height:18px">Output window</div>
<svg class="a" style="left:1846px;top:3px" width="22" height="22" viewBox="-.5 -.5 22 22"><rect x="-.5" y="-.5" width="22" height="22" rx="3.500" fill="#686868"/><rect x="6" y="6" width="8" height="8" fill="none" stroke="#000" stroke-width="1"/><rect x="5.500" y="5.500" width="9" height="2" fill="#000"/></svg>
<svg class="a" style="left:1870px;top:3px" width="22" height="22" viewBox="-.5 -.5 22 22"><rect x="-.5" y="-.5" width="22" height="22" rx="3.500" fill="#686868"/><rect x="7" y="9" width="5" height="5" fill="none" stroke="#000" stroke-width="1"/><rect x="6.500" y="8.500" width="6" height="2" fill="#000"/><path d="M9 8.500V6H14V10.500H12.500" fill="none" stroke="#000" stroke-width="1"/><rect x="8.500" y="5.500" width="6" height="2" fill="#000"/></svg>
<svg class="a" style="left:1894px;top:3px" width="22" height="22" viewBox="-.5 -.5 22 22"><rect x="-.5" y="-.5" width="22" height="22" rx="3.500" fill="#686868"/><path d="M6.500 6.500l7.500 7M14 6.500l-7.500 7" stroke="#000" stroke-width="1.400"/></svg>
<div class="a" style="left:1px;top:29px;width:1898px;height:31px;background:#d4d4d4;overflow:hidden"><pre class="a" style="left:4px;top:-6.500px;font:15px/19.500px 'Liberation Mono',monospace;color:#1e1e1e">Function argument information has been propagated
The initial autoanalysis has been finished.</pre></div>
<div class="a" style="left:1899px;top:28px;width:19px;height:32px;background:#373737"></div>
<div class="a" style="left:1902px;top:37px;width:14px;height:20px;border-radius:7px;background:#5a5a5a;border-radius:6px"></div>
<div class="a mono" style="left:7px;top:66px;line-height:18px">Python</div>
<div class="a" style="left:66px;top:62px;width:1853px;height:22px;background:#363636;border:1px solid #444;border-radius:2px"></div>
<div class="a" style="left:0;top:86px;width:1920px;height:21px;background:#353535"></div>
<div class="a mono" style="left:2px;top:89px;line-height:18px">AU:  idle</div>
<div class="a mono" style="left:95px;top:89px;line-height:18px">Down</div>
<div class="a mono" style="left:171px;top:89px;line-height:18px">Disk: 48GB</div>
<div class="a" style="left:92px;top:87px;width:1px;height:18px;background:#d8d8d8"></div>
<div class="a" style="left:168px;top:87px;width:1px;height:18px;background:#d8d8d8"></div>
<div class="a" style="left:254px;top:87px;width:1px;height:18px;background:#d8d8d8"></div>
</div>
</body>
</html>
